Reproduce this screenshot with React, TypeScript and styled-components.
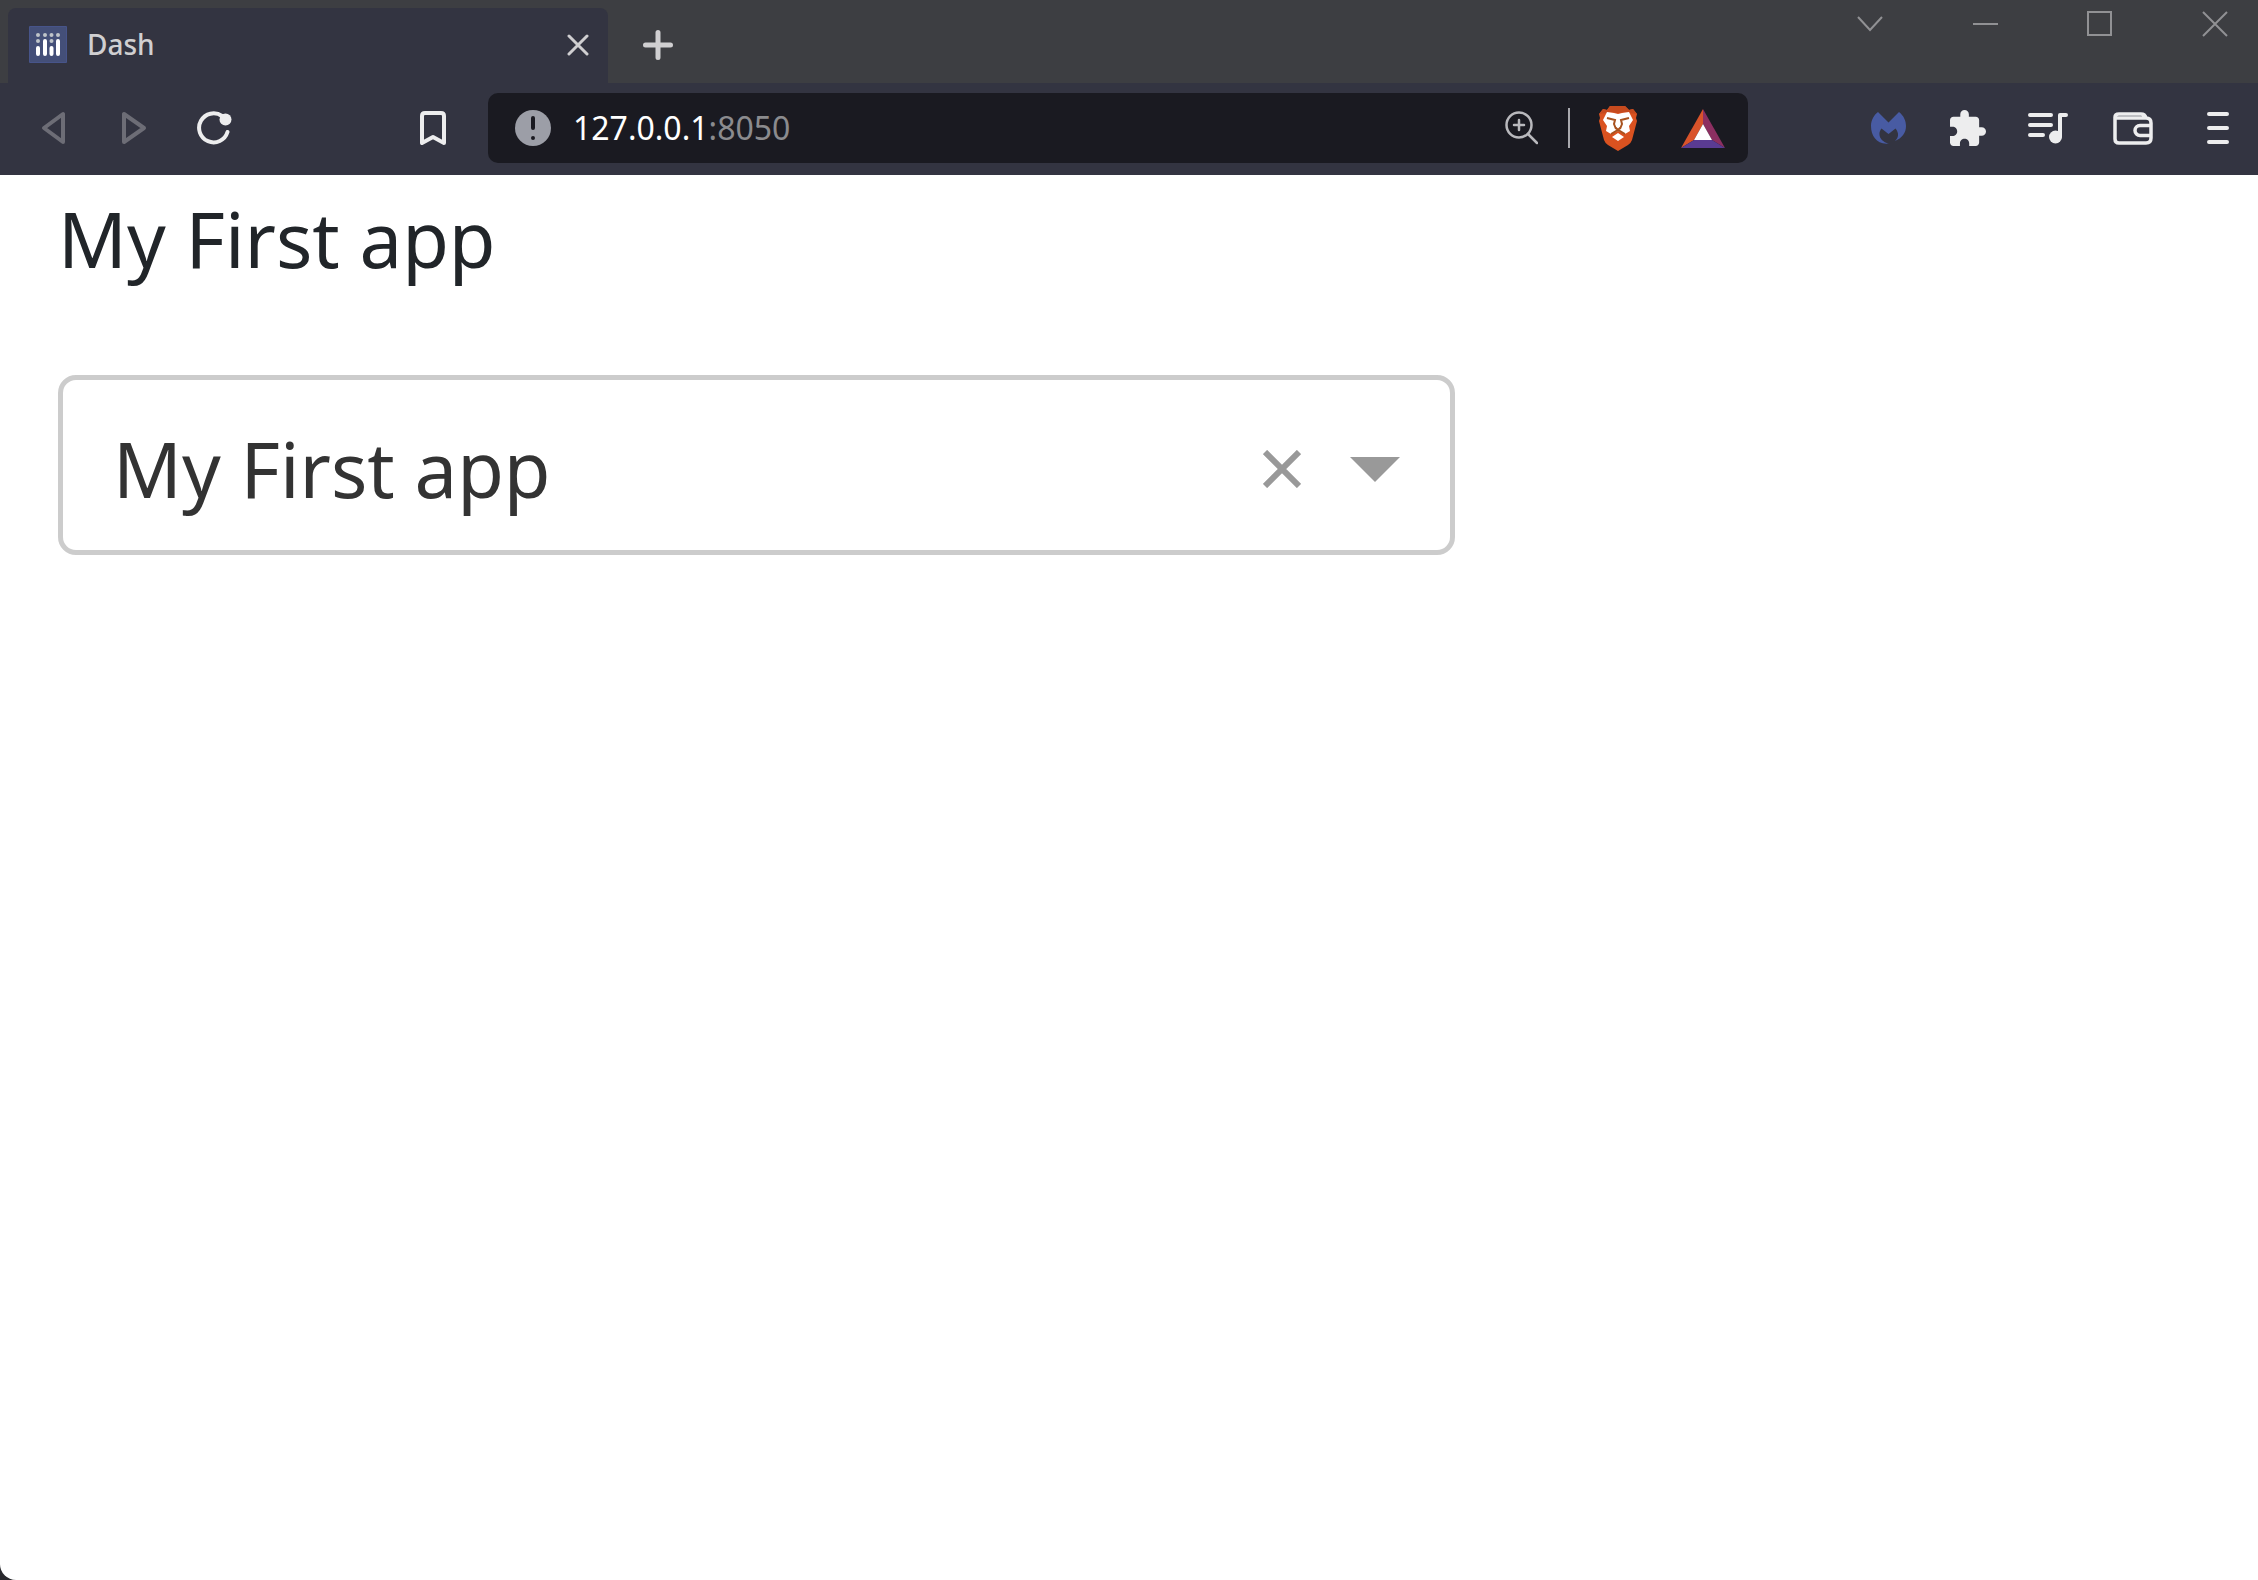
import React, { useRef, useState } from "react";
import styled, { createGlobalStyle } from "styled-components";

const Global = createGlobalStyle`
  *, *::before, *::after { box-sizing: border-box; }
  html, body { margin: 0; background: #29292d; }
  body, button, input, select { font-family: "Noto Sans", "Open Sans", sans-serif; }
  button, input, select { margin: 0; padding: 0; border: 0; background: none; color: inherit; }
  svg { display: block; flex: none; }
`;

const Window = styled.div`
  display: flex;
  flex-direction: column;
  min-height: 100vh;
  overflow: hidden;
  border-bottom-left-radius: 16px;
  background: #fff;
`;

const TabStrip = styled.header`
  display: flex;
  align-items: flex-start;
  height: 83px;
  padding-left: 8px;
  background: #3d3e42;
  color: #d0cfd1;
`;

const Tab = styled.div`
  display: flex;
  align-items: center;
  width: 600px;
  height: 75px;
  margin-top: 8px;
  padding: 0 16px 2px 21px;
  border-radius: 8px 8px 0 0;
  background: #333441;
`;

const TabTitle = styled.span`
  flex: 1;
  margin-left: 20px;
  padding-bottom: 2px;
  font-size: 28px;
  font-weight: 500;
  line-height: 40px;
`;

const IconButton = styled.button<{ $w?: number; $h?: number }>`
  display: flex;
  flex: none;
  align-items: center;
  justify-content: center;
  width: ${(p) => p.$w ?? 80}px;
  height: ${(p) => p.$h ?? 70}px;
`;

const WindowControls = styled.div`
  display: flex;
  gap: 29px;
  margin-left: auto;
  color: #919194;
`;

const Toolbar = styled.nav`
  display: flex;
  align-items: center;
  height: 92px;
  padding: 0 0 2px 14px;
  background: #333441;
  color: #ededee;
`;

const NavButtons = styled.div`
  display: flex;
  flex: none;
  margin-right: 124px;
`;

const Address = styled.form`
  display: flex;
  flex: 0 1 1260px;
  align-items: center;
  min-width: 0;
  height: 70px;
  margin-right: auto;
  padding-left: 27px;
  border-radius: 10px;
  background: #1a1a21;
`;

const Host = styled.input`
  field-sizing: content;
  margin-left: 22px;
  color: #fff;
  font-size: 32px;
  line-height: 44px;
`;

const Port = styled.input`
  flex: 1;
  min-width: 0;
  color: #8b8b8e;
  font-size: 32px;
  line-height: 44px;
`;

const Divider = styled.span`
  flex: none;
  width: 2px;
  height: 40px;
  margin-right: 8px;
  background: #a9a9ae;
`;

const Actions = styled.div`
  display: flex;
  flex: none;
`;

const Page = styled.main`
  flex: 1;
  padding: 10px 58px;
`;

const Heading = styled.h1`
  min-height: 108px;
  margin: 0;
  color: #212529;
  font-size: 76px;
  font-weight: 400;
  line-height: 108px;
`;

const Dropdown = styled.div`
  display: flex;
  align-items: center;
  width: 1397px;
  max-width: 100%;
  height: 180px;
  margin-top: 82px;
  padding: 8px 30px 0 50px;
  border: 5px solid #ccc;
  border-radius: 18px;
  color: #999;
`;

const Select = styled.select`
  flex: 1;
  min-width: 0;
  appearance: none;
  color: #333;
  font-size: 76px;
  line-height: 108px;
`;

const line = { fill: "none", stroke: "currentColor", strokeLinecap: "round", strokeLinejoin: "round" } as const;
const thin = { fill: "none", stroke: "currentColor", strokeWidth: 2 } as const;

const DashLogo = () => (
  <svg width="38" height="38" viewBox="0 0 38 38">
    <rect width="38" height="37" rx="1" fill="#47548a" />
    <rect x="1" y="1" width="36" height="35" fill="#444f78" />
    <g fill="#bfc4c9">
      {[9, 16, 22.5, 29].map((x) => <circle key={x} cx={x} cy="9" r="2" />)}
      <circle cx="9" cy="15" r="2" />
      <circle cx="22.5" cy="15" r="2" />
    </g>
    <path d="M9 22v6M16 15v13M22.500 22v6M29 15v13" stroke="#fff" strokeWidth="4" strokeLinecap="round" />
  </svg>
);

const Lion = () => (
  <svg width="40" height="46" viewBox="0 0 40 46">
    <path d="M12 1h15l4 4 4-1 4 5-1 4 1 3-5 19q-1 3-4 5l-10 6-10-6q-3-2-4-5L1 16l1-3-1-4 4-5 4 1z" fill="#da5220" />
    <path d="M12 1h15l4 4 4-1 4 5-7-1-5-1-7 1-7-1-5 1-7 1 4-5 4 1z" fill="#c64a1e" />
    <path d="M9 7l7 1 4 1 4-1 7-1 4 8-4 6 1 5-5 3-7-3-7 3-5-3 1-5-4-6z" fill="#fff" />
    <path d="M20 28l6 4-6 4-6-4z" fill="#fff" />
    <path d="M9 13l8 2-1 4 2 5M31 13l-8 2 1 4-2 5M13 29l7-4 7 4M18 23l2 2 2-2" fill="none" stroke="#a8521f" strokeWidth="2" />
  </svg>
);

const Bat = () => (
  <svg width="46" height="41" viewBox="0 0 46 41">
    <path d="M23 1v15l-9 16L1 40z" fill="#d9532a" />
    <path d="M23 1v15l9 16 13 8z" fill="#8c2f61" />
    <path d="M1 40l13-8h18l13 8z" fill="#5a3b92" />
    <path d="M23 16l9 16H14z" fill="#fff" />
  </svg>
);

export default function App() {
  const [value, setValue] = useState("My First app");
  const select = useRef<HTMLSelectElement>(null);
  return (
    <>
      <Global />
      <Window>
        <TabStrip>
          <Tab>
            <DashLogo />
            <TabTitle>Dash</TabTitle>
            <IconButton $w={28} $h={40} aria-label="Close tab">
              <svg width="22" height="22" viewBox="0 0 22 22" {...line} strokeWidth="3"><path d="M2 2l18 18M20 2L2 20" /></svg>
            </IconButton>
          </Tab>
          <IconButton $w={100} $h={90} aria-label="New tab">
            <svg width="30" height="30" viewBox="0 0 30 30" {...line} strokeWidth="5"><path d="M15 2.500v25M2.500 15h25" /></svg>
          </IconButton>
          <WindowControls>
            <IconButton $w={86} $h={48} aria-label="Search tabs">
              <svg width="26" height="16" viewBox="0 0 26 16" {...thin}><path d="M1 1l12 13L25 1" /></svg>
            </IconButton>
            <IconButton $w={86} $h={48} aria-label="Minimize">
              <svg width="25" height="2" viewBox="0 0 25 2"><path d="M0 0h25v2H0z" fill="currentColor" /></svg>
            </IconButton>
            <IconButton $w={86} $h={48} aria-label="Maximize">
              <svg width="26" height="26" viewBox="0 0 26 26" {...thin}><path d="M1 1h23v23H1z" /></svg>
            </IconButton>
            <IconButton $w={86} $h={48} aria-label="Close window">
              <svg width="26" height="26" viewBox="0 0 26 26" {...thin}><path d="M1 1l24 24M25 1L1 25" /></svg>
            </IconButton>
          </WindowControls>
        </TabStrip>
        <Toolbar>
          <NavButtons>
            <IconButton aria-label="Back">
              <svg width="26" height="34" viewBox="0 0 26 34" {...line} stroke="#6d6d76" strokeWidth="4"><path d="M22 3v28L3 17z" /></svg>
            </IconButton>
            <IconButton aria-label="Forward">
              <svg width="26" height="34" viewBox="0 0 26 34" {...line} stroke="#6d6d76" strokeWidth="4"><path d="M3 3v28l20-14z" /></svg>
            </IconButton>
            <IconButton aria-label="Reload">
              <svg width="36" height="34" viewBox="0 0 36 34" {...line} strokeWidth="4">
                <path d="M26 5A14.500 14.500 0 1 0 31.500 21" /><circle cx="29.5" cy="8.5" r="6" fill="currentColor" stroke="none" />
              </svg>
            </IconButton>
          </NavButtons>
          <IconButton $w={110} aria-label="Bookmark">
            <svg width="26" height="34" viewBox="0 0 26 34" {...line} strokeWidth="4"><path d="M2 5q0-3 3-3h16q3 0 3 3v27l-11-6-11 6z" /></svg>
          </IconButton>
          <Address onSubmit={(e) => e.preventDefault()}>
            <IconButton type="button" $w={36} $h={36} aria-label="Site information">
              <svg width="36" height="36" viewBox="0 0 36 36">
                <circle cx="18" cy="18" r="18" fill="#9c9ea7" />
                <path d="M18 8v10M18 28v0" {...line} stroke="#1a1a21" strokeWidth="4" />
              </svg>
            </IconButton>
            <Host aria-label="Host" defaultValue="127.0.0.1" />
            <Port aria-label="Port" defaultValue=":8050" />
            <IconButton type="button" $w={94} aria-label="Zoom">
              <svg width="33" height="34" viewBox="0 0 33 34" {...line} stroke="#b9b9bd" strokeWidth="2.500">
                <circle cx="14" cy="14" r="12.5" /><path d="M23 23l9 9M14 9v10M9 14h10" />
              </svg>
            </IconButton>
            <Divider />
            <IconButton type="button" aria-label="Brave Shields"><Lion /></IconButton>
            <IconButton type="button" $w={90} aria-label="Brave Rewards"><Bat /></IconButton>
          </Address>
          <Actions>
            <IconButton aria-label="Malwarebytes">
              <svg width="35" height="32" viewBox="0 0 35 32">
                <path d="M7 0L17.500 10.500 28 0C33 4 35 9 35 14c0 7-4 12-11 15 4-4 4-8 .5-12.500L17.500 22l-7-5.500C6 22 9 30 18 31.500 6 33 0 24 0 14 0 8 3 3 7 0z" fill="#485ba3" />
              </svg>
            </IconButton>
            <IconButton aria-label="Extensions">
              <svg width="36" height="36" viewBox="2 1 21 21" fill="currentColor">
                <path d="M20.500 11H19V7c0-1.100-.9-2-2-2h-4V3.500C13 2.120 11.880 1 10.500 1S8 2.120 8 3.500V5H4c-1.100 0-1.990.9-1.990 2v3.800H3.500c1.490 0 2.700 1.210 2.700 2.700s-1.210 2.700-2.700 2.700H2V20c0 1.100.9 2 2 2h3.800v-1.500c0-1.490 1.210-2.700 2.700-2.700 1.490 0 2.700 1.210 2.700 2.700V22H17c1.100 0 2-.9 2-2v-4h1.500c1.380 0 2.500-1.120 2.500-2.500S21.880 11 20.500 11z" />
              </svg>
            </IconButton>
            <IconButton aria-label="Playlist">
              <svg width="40" height="32" viewBox="0 0 40 32" {...line} strokeWidth="4">
                <path d="M2 3h21M2 13h21M2 23h13M32 24V3h6" /><circle cx="27.500" cy="25" r="6.500" fill="currentColor" stroke="none" />
              </svg>
            </IconButton>
            <IconButton $w={90} aria-label="Wallet">
              <svg width="40" height="33" viewBox="0 0 40 33" {...line} strokeWidth="3.500">
                <path d="M2 5v22q0 4 4 4h27q5 0 5-5V11q0-5-5-5H3M2 5q0-3 4-3h22q4 0 5 4M38 13.500H27a5 5 0 0 0 0 10h11" />
              </svg>
            </IconButton>
            <IconButton aria-label="Menu">
              <svg width="24" height="32" viewBox="0 0 24 32" {...line} strokeWidth="4"><path d="M3 2h18M3 16h18M3 30h18" /></svg>
            </IconButton>
          </Actions>
        </Toolbar>
        <Page>
          <Heading>{value}</Heading>
          <Dropdown>
            <Select ref={select} aria-label="Title" value={value} onChange={(e) => setValue(e.target.value)}>
              {value === "" && <option value="" />}
              <option>My First app</option>
            </Select>
            <IconButton $w={96} aria-label="Clear value" onClick={() => setValue("")}>
              <svg width="38" height="38" viewBox="0 0 38 38" fill="none" stroke="currentColor" strokeWidth="6"><path d="M2 2l34 34M36 2L2 36" /></svg>
            </IconButton>
            <IconButton $w={90} aria-label="Show options" onClick={() => select.current?.showPicker()}>
              <svg width="50" height="25" viewBox="0 0 50 25"><path d="M0 0h50L25 25z" fill="currentColor" /></svg>
            </IconButton>
          </Dropdown>
        </Page>
      </Window>
    </>
  );
}
